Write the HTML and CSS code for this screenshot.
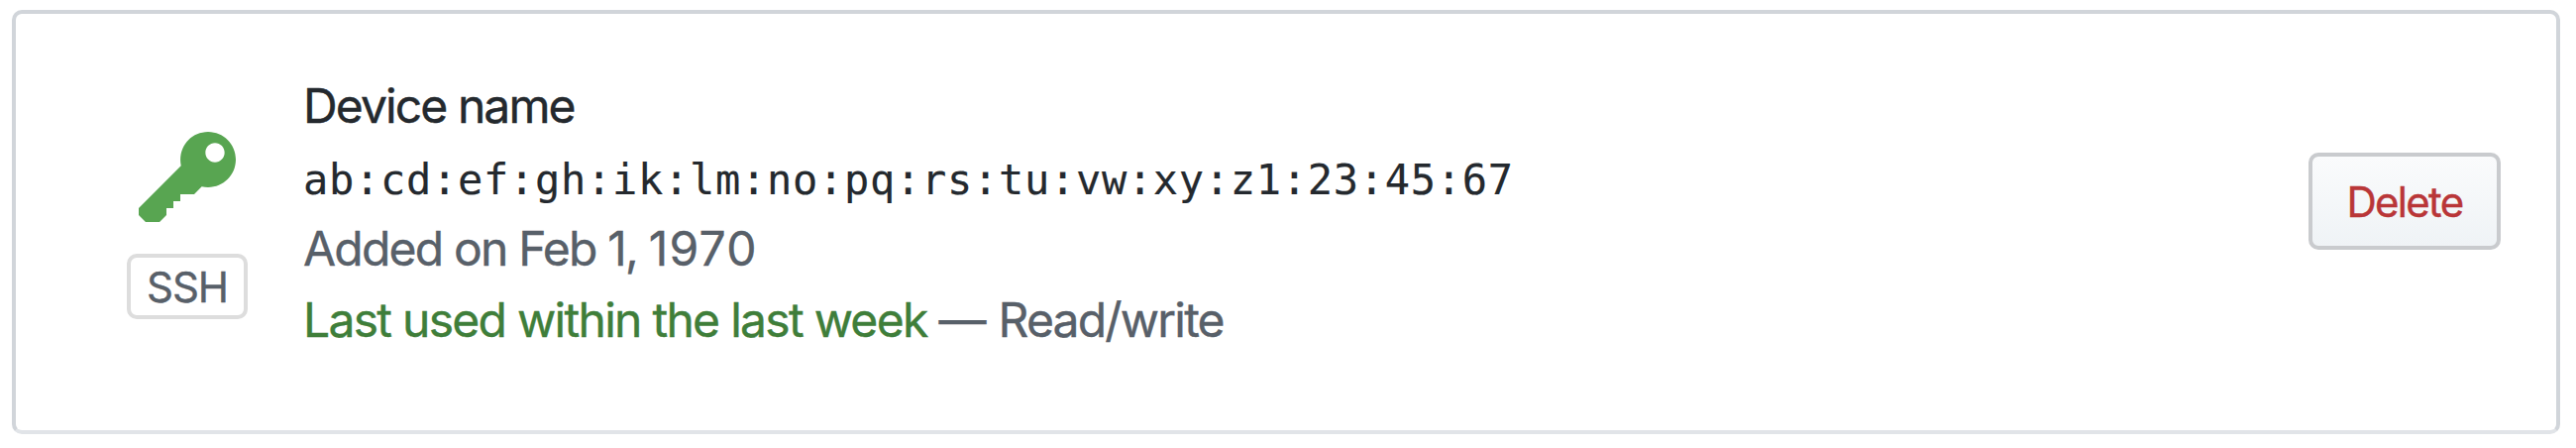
FILE: index.html
```html
<!DOCTYPE html>
<html lang="en">
<head>
<meta charset="utf-8">
<title>SSH key</title>
<link rel="stylesheet" href="styles.css">
</head>
<body>
<main class="key-card">
  <div class="key-type">
    <svg class="key-icon" viewBox="0 0 14 16" aria-hidden="true"><path fill-rule="evenodd" d="M12.83 2.17C12.08 1.42 11.14 1.03 10 1c-1.13.03-2.08.42-2.83 1.17S6.04 3.86 6.01 5c0 .3.03.59.09.89L0 12v1l1 1h2l1-1v-1h1v-1h1v-1h2l1.09-1.11c.3.08.59.11.91.11 1.14-.03 2.08-.42 2.83-1.17S13.97 6.14 14 5c-.03-1.14-.42-2.08-1.17-2.83zM11 5.38c-.77 0-1.38-.61-1.38-1.38 0-.77.61-1.38 1.38-1.38.77 0 1.38.61 1.38 1.38 0 .77-.61 1.38-1.38 1.38z"/></svg>
    <span class="badge">SSH</span>
  </div>
  <div class="details">
    <strong class="title">Device name</strong>
    <code class="fingerprint">ab:cd:ef:gh:ik:lm:no:pq:rs:tu:vw:xy:z1:23:45:67</code>
    <span class="added">Added on Feb 1, <span class="year">1970</span></span>
    <span class="usage"><span class="recent">Last used within the last week</span><span class="dash">—</span><span class="access">Read/write</span></span>
  </div>
  <button class="delete" type="button">Delete</button>
</main>
</body>
</html>
```

FILE: styles.css
```css
* { box-sizing: border-box; }
body {
  margin: 0;
  padding: 10px 16px 14px 12px;
  background: #fff;
  color: #24292e;
  font: 48px/72px Inter, "Liberation Sans", sans-serif;
}
.key-card {
  display: flex;
  align-items: flex-start;
  height: 428px;
  padding-right: 56px;
  border: 4px solid #d1d5da;
  border-bottom-color: #e1e4e8;
  border-radius: 10px;
}
.key-type {
  display: flex;
  flex-direction: column;
  align-items: center;
  gap: 18px;
  width: 122px;
  margin: 112px 56px 0 112px;
}
.key-icon { display: block; width: 98px; height: 112px; fill: #58a551; }
.badge {
  width: 122px;
  height: 66px;
  border: 4px solid #ddd;
  border-radius: 10px;
  color: #586069;
  font-size: 42px;
  line-height: 60px;
  letter-spacing: -1px;
  text-align: center;
  -webkit-text-stroke: 0.4px currentColor;
}
.details {
  display: flex;
  flex: 1;
  flex-direction: column;
  margin-top: 57px;
  white-space: nowrap;
  color: #586069;
  -webkit-text-stroke: 0.4px currentColor;
}
.title { color: #24292e; font-weight: 400; letter-spacing: -1.9px; }
.fingerprint {
  height: 72px;
  padding-top: 3px;
  color: #24292e;
  font-family: "DejaVu Sans Mono", monospace;
  font-size: 42px;
  letter-spacing: 0.71px;
  -webkit-text-stroke: 0.2px currentColor;
}
.added { letter-spacing: -1.8px; }
.year { letter-spacing: 1.2px; }
.usage { display: flex; }
.recent { color: #3f7e3a; letter-spacing: -1.72px; }
.dash { width: 72px; text-align: center; }
.access { letter-spacing: -1.8px; }
.delete {
  width: 194px;
  height: 98px;
  margin-top: 140px;
  padding: 1px 0 0;
  border: 4px solid #c9cbce;
  border-radius: 10px;
  background: linear-gradient(#fafbfc, #eff3f6);
  color: #b93638;
  font: 42px/60px Inter, "Liberation Sans", sans-serif;
  letter-spacing: -1.7px;
  -webkit-text-stroke: 0.4px currentColor;
}
```
